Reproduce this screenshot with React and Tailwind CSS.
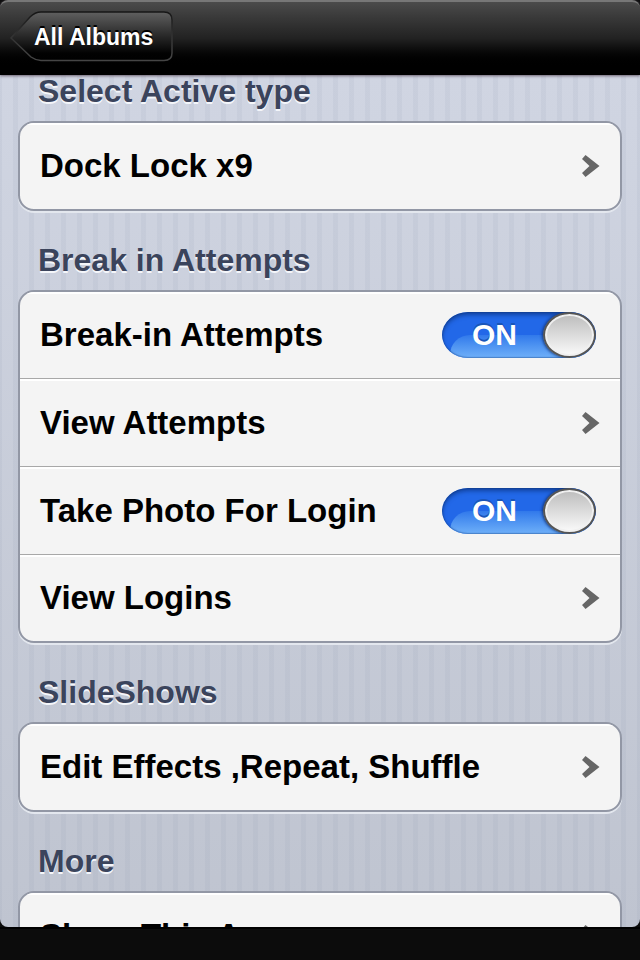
import React, { useState } from 'react';

const sections = [
  { title: 'Select Active type', rows: [{ label: 'Dock Lock x9' }] },
  {
    title: 'Break in Attempts',
    rows: [
      { label: 'Break-in Attempts', toggle: 'breakIn' },
      { label: 'View Attempts' },
      { label: 'Take Photo For Login', toggle: 'photo' },
      { label: 'View Logins' },
    ],
  },
  { title: 'SlideShows', rows: [{ label: 'Edit Effects ,Repeat, Shuffle' }] },
  { title: 'More', rows: [{ label: 'Share This App' }] },
];

const rowClass =
  'flex h-[88px] w-full items-center justify-between px-5 text-left shadow-[inset_0_2px_0_#ffffff]';

function BackButton({ children }) {
  return (
    <button
      type="button"
      className="relative mb-1 ml-2.5 h-[51px] w-[163px] pl-6 pr-4 text-left text-[23px] leading-[46px] font-bold whitespace-nowrap text-white [text-shadow:0_-2px_0_#000000]"
    >
      <svg className="absolute inset-0" width="163" height="51" viewBox="0 0 163 51" fill="none" aria-hidden="true">
        <defs>
          <linearGradient id="backFill" x1="0" y1="0" x2="0" y2="1">
            <stop offset="0" stopColor="#606060" />
            <stop offset="0.5" stopColor="#282828" />
            <stop offset="0.85" stopColor="#020202" />
            <stop offset="1" stopColor="#000000" />
          </linearGradient>
          <linearGradient id="backEdge" x1="0" y1="0" x2="0" y2="1">
            <stop offset="0" stopColor="#161616" />
            <stop offset="0.5" stopColor="#333333" />
            <stop offset="1" stopColor="#454545" />
          </linearGradient>
        </defs>
        <path
          d="M1 27 L20 6 Q25 1 31 1 H154 Q162 1 162 9 V42 Q162 49.500 154 49.500 H31 Q26 49.500 21 46 Z"
          fill="url(#backFill)"
          stroke="url(#backEdge)"
          strokeWidth="1.500"
        />
      </svg>
      <span className="relative">{children}</span>
    </button>
  );
}

function Chevron() {
  return (
    <svg width="19" height="24" viewBox="0 0 19 24" fill="none" aria-hidden="true">
      <path d="M4.500 1 L18.500 12 L4.500 23 L1 19 L8.500 12 L1 5 Z" fill="#666666" />
    </svg>
  );
}

function Switch({ id, checked, onChange }) {
  return (
    <span className="relative mr-1 block h-[46px] w-[154px] overflow-hidden rounded-[26px_/_23px]">
      <input
        id={id}
        type="checkbox"
        role="switch"
        checked={checked}
        onChange={onChange}
        className="peer absolute inset-0 z-10 m-0 size-full cursor-pointer appearance-none opacity-0"
      />
      <span className="flex size-full items-center justify-end bg-[#e8e8e8] pr-6 text-[30px] font-bold text-[#7f7f7f] peer-checked:justify-start peer-checked:bg-[#2268e8] peer-checked:pr-0 peer-checked:pl-[30px] peer-checked:text-white peer-checked:[text-shadow:0_-2px_0_#1a55b8]">
        {checked && (
          <span className="absolute top-[23px] left-2 h-[46px] w-[138px] rounded-t-[20px] bg-linear-to-b from-[#3179eb] to-[#6fb0f8] to-50%" />
        )}
        <span className="relative">{checked ? 'ON' : 'OFF'}</span>
      </span>
      <span className="absolute inset-0 rounded-[26px_/_23px] shadow-[inset_0_3px_4px_#0b3078aa,inset_0_0_1px_1px_#17458e66]" />
      <span className="absolute inset-y-0 left-0 w-[53px] rounded-[50%] border-2 border-[#555555] bg-linear-to-b from-[#bcbcbc] to-[#fbfbfb] shadow-[inset_0_0_0_2px_#f0f0f0,-1px_0_3px_#12357a] peer-checked:right-0 peer-checked:left-auto" />
    </span>
  );
}

function Row({ row, checked, onToggle }) {
  if (row.toggle) {
    return (
      <div className={rowClass}>
        <label htmlFor={row.toggle}>{row.label}</label>
        <Switch id={row.toggle} checked={checked} onChange={onToggle} />
      </div>
    );
  }
  return (
    <button type="button" className={rowClass}>
      <span className="whitespace-nowrap">{row.label}</span>
      <Chevron />
    </button>
  );
}

export default function App() {
  const [toggles, setToggles] = useState({ breakIn: true, photo: true });

  const handleToggle = (key) => {
    setToggles((prev) => ({ ...prev, [key]: !prev[key] }));
  };

  return (
    <div className="flex h-screen flex-col bg-[#0c0c0c] font-['Liberation_Sans',Arial,sans-serif]">
      <header className="z-10 flex h-[75px] shrink-0 items-center rounded-t-lg border-t-2 border-[#777777] bg-linear-to-b from-[#4b4b4b] via-[#222222] via-50% to-black to-90% shadow-[0_1px_3px_#6b6070]">
        <BackButton>All Albums</BackButton>
      </header>

      <main className="min-h-0 flex-1 overflow-hidden rounded-b-lg bg-[image:repeating-linear-gradient(90deg,#8490a818_0_2px,transparent_2px_13px,#8490a818_13px_16px),linear-gradient(180deg,#d0d5e2,#bfc4d0)]">
        <div className="-mt-[33px] px-[18px]">
          {sections.map((section) => (
            <section key={section.title}>
              <h2 className="flex h-[79px] items-center pt-[18px] pl-5 text-[32px] leading-9 font-bold whitespace-nowrap text-[#3b445c] [text-shadow:0_2px_0_#f4f6fa]">
                {section.title}
              </h2>
              <div className="divide-y divide-[#a8a8a8] overflow-hidden rounded-2xl border-2 border-[#9297a5] bg-[#f4f4f4] text-[33px] leading-10 font-bold text-black shadow-[0_2px_0_#e3e7ee] [&>*:first-child]:h-[87px] [&>*:last-child]:h-[86px]">
                {section.rows.map((row) => (
                  <Row
                    key={row.label}
                    row={row}
                    checked={toggles[row.toggle]}
                    onToggle={() => handleToggle(row.toggle)}
                  />
                ))}
              </div>
            </section>
          ))}
        </div>
      </main>

      <footer className="h-[33px] shrink-0 border-t-2 border-black" />
    </div>
  );
}
